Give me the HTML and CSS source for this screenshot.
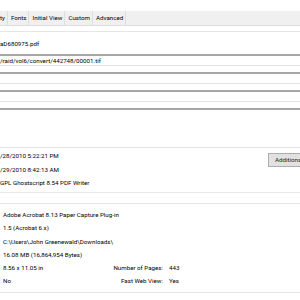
FILE: index.html
```html
<!DOCTYPE html>
<html lang="en">
<head>
    <meta charset="UTF-8">
    <title>Document Properties</title>
    <link rel="stylesheet" href="styles.css">
</head>
<body>
    <div class="dialog">
        <nav class="tabs">
            <span class="tab first">ty</span>
            <span class="tab">Fonts</span>
            <span class="tab">Initial View</span>
            <span class="tab">Custom</span>
            <span class="tab">Advanced</span>
        </nav>

        <section class="group description">
            <div class="file-name">aD680975.pdf</div>
            <div class="field">/raid/vol6/convert/442748/00001.tif</div>
            <div class="field"></div>
            <div class="field"></div>
            <div class="field tall"></div>

            <div class="dates">
                <div class="date-rows">
                    <div class="row">/28/2010 5:22:21 PM</div>
                    <div class="row">/29/2010 8:42:13 AM</div>
                    <div class="row">GPL Ghostscript 8.54 PDF Writer</div>
                </div>
                <button class="button">Additional Metadata...</button>
            </div>
        </section>

        <section class="group advanced">
            <div class="row">Adobe Acrobat 8.13 Paper Capture Plug-in</div>
            <div class="row">1.5 (Acrobat 6.x)</div>
            <div class="row">C:\Users\John Greenewald\Downloads\</div>
            <div class="row">16.08 MB (16,864,954 Bytes)</div>
            <div class="row pair">
                <span>8.56 x 11.05 in</span>
                <span class="label">Number of Pages:</span>
                <span>443</span>
            </div>
            <div class="row pair">
                <span>No</span>
                <span class="label">Fast Web View:</span>
                <span>Yes</span>
            </div>
        </section>
    </div>
</body>
</html>
```

FILE: styles.css
```css
* {
    margin: 0;
    padding: 0;
    box-sizing: border-box;
}

body {
    background: #fff;
    font-family: Roboto, "Noto Sans", sans-serif;
    font-size: 6.2px;
    color: #000;
    width: 300px;
    height: 300px;
    overflow: hidden;
}

.dialog {
    padding-top: 11px;
    overflow: hidden;
}

.tabs {
    display: flex;
    height: 15px;
    background: #f0f0f0;
    border-bottom: 1px solid #dcdcdc;
}

.tab {
    display: flex;
    align-items: center;
    padding: 0 2px 0 3px;
    border-right: 1px solid #dedede;
    white-space: nowrap;
}

.tab.first {
    padding-left: 0;
}

.group {
    border-top: 1px solid #e6e6e6;
}

.description {
    margin-top: 5px;
    padding-top: 6px;
}

.file-name {
    height: 13px;
    line-height: 13px;
    margin-bottom: 3px;
}

.field {
    height: 12px;
    line-height: 10px;
    margin-bottom: 6px;
    border-top: 2px solid #a6a6a6;
    border-bottom: 1px solid #e4e4e4;
    white-space: nowrap;
}

.field.tall {
    height: 40px;
    margin-bottom: 0;
}

.dates {
    display: grid;
    grid-template-columns: 268px max-content;
    align-items: start;
    height: 45px;
    padding-top: 2px;
    border-bottom: 1px solid #e8e8e8;
}

.date-rows .row {
    height: 13.5px;
    line-height: 13.5px;
    white-space: nowrap;
}

.button {
    margin-top: 3px;
    height: 14px;
    padding: 0 6px;
    font-family: inherit;
    font-size: 6.2px;
    color: #222;
    background: #e1e1e1;
    border: 1px solid #adadad;
    white-space: nowrap;
}

.advanced {
    margin-top: 10px;
    padding: 5px 0 3px 3px;
    border-bottom: 1px solid #e6e6e6;
}

.advanced .row {
    height: 13.3px;
    line-height: 13.3px;
    white-space: nowrap;
}

.pair {
    display: grid;
    grid-template-columns: 104px 50px auto;
    column-gap: 6px;
}

.pair .label {
    text-align: right;
}
```
